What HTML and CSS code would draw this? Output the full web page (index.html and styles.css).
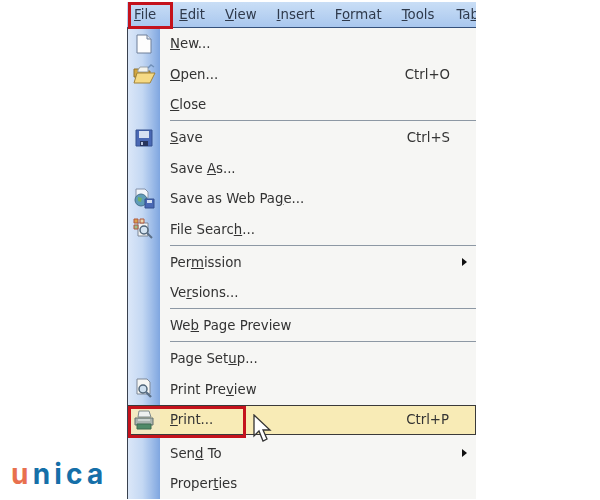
FILE: index.html
```html
<!DOCTYPE html>
<html lang="en">

<head>
    <meta charset="UTF-8">
    <meta name="viewport" content="width=device-width, initial-scale=1.0">
    <title>File menu - Print</title>
    <link rel="stylesheet" href="styles.css">
</head>

<body>
    <div class="shot">
        <!-- Menu bar -->
        <div class="menu-bar">
            <span><u>F</u>ile</span>
            <span><u>E</u>dit</span>
            <span><u>V</u>iew</span>
            <span><u>I</u>nsert</span>
            <span>F<u>o</u>rmat</span>
            <span><u>T</u>ools</span>
            <span>Ta<u>b</u></span>
        </div>

        <!-- File menu -->
        <div class="menu">
            <div class="row">
                <div class="rail">
                    <svg width="20" height="20" viewBox="0 0 20 20"><path d="M3 1h10l4 4v14H3z" fill="#fdfdfd" stroke="#6f7f98"/><path d="M13 1v4h4" fill="#dfe6f0" stroke="#6f7f98"/></svg>
                </div>
                <span class="label"><u>N</u>ew...</span>
            </div>
            <div class="row">
                <div class="rail">
                    <svg width="24" height="22" viewBox="0 0 24 22"><path d="M2 6h7l2 2h7v6H2z" fill="#d2a63f" stroke="#8f7330"/><path d="M6 7l2-3h8v5H6z" fill="#f4f4ee" stroke="#9aa2a8"/><path d="M2 20l3-10h18l-5 10z" fill="#f6da84" stroke="#a08238"/><path d="M16 5l3-3 3 2" fill="none" stroke="#6f8fb8" stroke-width="1.4"/></svg>
                </div>
                <span class="label"><u>O</u>pen...</span>
                <span class="key">Ctrl+O</span>
            </div>
            <div class="row">
                <div class="rail"></div>
                <span class="label"><u>C</u>lose</span>
            </div>
            <div class="sep"><div class="rail"></div><hr></div>
            <div class="row">
                <div class="rail">
                    <svg width="20" height="20" viewBox="0 0 20 20"><path d="M2 2h16v16H2z" fill="#4a68b4" stroke="#34508f"/><path d="M5 3h10v7H5z" fill="#d6e0f2"/><path d="M6 13h8v5H6z" fill="#27345c"/><path d="M7 14h2v3H7z" fill="#b8c4de"/></svg>
                </div>
                <span class="label"><u>S</u>ave</span>
                <span class="key">Ctrl+S</span>
            </div>
            <div class="row">
                <div class="rail"></div>
                <span class="label">Save <u>A</u>s...</span>
            </div>
            <div class="row">
                <div class="rail">
                    <svg width="22" height="22" viewBox="0 0 22 22"><path d="M3 1h9l3 3v6H3z" fill="#f2f5fa" stroke="#8391a8"/><circle cx="8" cy="12" r="6" fill="#5f9cb8" stroke="#47708c"/><path d="M5 9l4 1-1 4-3-1z" fill="#74b06a"/><path d="M12 11h9v9h-9z" fill="#4a68b4" stroke="#34508f"/><path d="M14 12h5v3h-5z" fill="#d6e0f2"/></svg>
                </div>
                <span class="label">Save as Web Pa<u>g</u>e...</span>
            </div>
            <div class="row">
                <div class="rail">
                    <svg width="22" height="22" viewBox="0 0 22 22"><path d="M5 5h10v13H5z" fill="#f4f4f2" stroke="#7c8796"/><path d="M1 1h4v4H1z" fill="#d9a24c" stroke="#b0563c"/><path d="M7 1h4v4H7z" fill="#e8d8b0" stroke="#b0563c"/><path d="M1 7h4v4H1z" fill="#9cc08c" stroke="#b0563c"/><circle cx="11" cy="12" r="4" fill="#d4e4f2" stroke="#4f6478" stroke-width="1.5"/><path d="M14 15l5 5" stroke="#5b7088" stroke-width="2"/></svg>
                </div>
                <span class="label">File Searc<u>h</u>...</span>
            </div>
            <div class="sep"><div class="rail"></div><hr></div>
            <div class="row">
                <div class="rail"></div>
                <span class="label">Per<u>m</u>ission</span>
                <span class="arrow"></span>
            </div>
            <div class="row">
                <div class="rail"></div>
                <span class="label">Ve<u>r</u>sions...</span>
            </div>
            <div class="sep"><div class="rail"></div><hr></div>
            <div class="row">
                <div class="rail"></div>
                <span class="label">We<u>b</u> Page Preview</span>
            </div>
            <div class="sep"><div class="rail"></div><hr></div>
            <div class="row">
                <div class="rail"></div>
                <span class="label">Page Set<u>u</u>p...</span>
            </div>
            <div class="row">
                <div class="rail">
                    <svg width="20" height="22" viewBox="0 0 20 22"><path d="M3 1h10l3 3v12H3z" fill="#f6f6f4" stroke="#7c8796"/><circle cx="9" cy="11" r="4" fill="#cfe0f0" stroke="#4f6478" stroke-width="1.5"/><path d="M12 14l5 5" stroke="#5b7088" stroke-width="2.4"/></svg>
                </div>
                <span class="label">Print Pre<u>v</u>iew</span>
            </div>
            <div class="row active">
                <div class="rail">
                    <svg width="22" height="20" viewBox="0 0 22 20"><path d="M6 1h10l2 6H5z" fill="#eef0f0" stroke="#7f8a8c"/><path d="M2 8h18v7H2z" fill="#a9b4b0" stroke="#65716e"/><path d="M4 14h14v5H4z" fill="#4f8a68" stroke="#3c6a50"/><path d="M5 10h12" stroke="#eef2f0"/></svg>
                </div>
                <span class="label"><u>P</u>rint...</span>
                <span class="key">Ctrl+P</span>
            </div>
            <div class="row">
                <div class="rail"></div>
                <span class="label">Sen<u>d</u> To</span>
                <span class="arrow"></span>
            </div>
            <div class="row">
                <div class="rail"></div>
                <span class="label">Proper<u>t</u>ies</span>
            </div>
        </div>

        <!-- Red marks and pointer on top of the screenshot -->
        <div class="mark mark-file"></div>
        <div class="mark mark-print"></div>
        <svg class="pointer" width="20" height="30" viewBox="0 0 20 30"><path d="M1 1v21l5-5 4 10 4-2-4-9h7z" fill="#fff" stroke="#333" stroke-width="1.3"/></svg>
    </div>

    <div class="logo"><span class="logo-u">u</span>nica</div>
</body>

</html>
```

FILE: styles.css
```css
/* Office 2003 style menu */
html,
body {
    margin: 0;
    height: 500px;
    overflow: hidden;
    background: #fff;
}

.shot {
    position: relative;
    width: 349px;
    height: 498px;
    margin: 2px 0 0 127px;
    overflow: hidden;
    font-family: "DejaVu Sans", sans-serif;
    font-size: 13.3px;
    color: #333;
    filter: blur(0.35px);
}

.menu-bar {
    display: flex;
    gap: 20px;
    height: 25px;
    padding-left: 7px;
    align-items: center;
    background: linear-gradient(#c9def6, #a9c7ee);
    border-bottom: 1px solid #34507a;
    white-space: nowrap;
    color: #2f3a4c;
}

.menu-bar span:first-child {
    margin-right: 3px;
}

.menu-bar span:last-child {
    margin-left: 2px;
}

.menu {
    border-left: 1px solid #39414f;
    background: #f6f6f4;
    padding-top: 0.6px;
}

.row,
.sep {
    display: flex;
}

.row {
    height: 30.5px;
    align-items: center;
}

.rail {
    flex: none;
    align-self: stretch;
    width: 32px;
    display: flex;
    align-items: center;
    justify-content: center;
    background: linear-gradient(90deg, #dbe7f8, #c4d8f3 45%, #7fa6e0);
}

.label {
    flex: 1;
    margin-left: 10px;
}

.key {
    margin-right: 26px;
}

.arrow {
    width: 0;
    height: 0;
    margin-right: 9px;
    border-left: 5px solid #111;
    border-top: 4px solid transparent;
    border-bottom: 4px solid transparent;
}

.sep {
    height: 2.5px;
}

.sep hr {
    flex: 1;
    height: 1px;
    margin: 0 0 0 10px;
    border: 0;
    background: #8d98a4;
}

.active {
    height: 28px;
    margin: 0.4px 0 3px;
    border-top: 1px solid #3a3a3a;
    border-bottom: 1px solid #3a3a3a;
    border-right: 1px solid #3a3a3a;
    background: #f8ebb6;
}

.active .rail {
    background: #f3e9c2;
}

.mark {
    position: absolute;
    border: 3px solid #c4121c;
    box-sizing: border-box;
}

.mark-file {
    left: 1px;
    top: 0;
    width: 45px;
    height: 27px;
}

.mark-print {
    left: 1px;
    top: 404px;
    width: 118px;
    height: 32px;
}

.pointer {
    position: absolute;
    left: 126px;
    top: 412px;
}

.logo {
    position: absolute;
    left: 11px;
    top: 457px;
    font-family: Inter, sans-serif;
    font-size: 28px;
    font-weight: 700;
    letter-spacing: 4.2px;
    color: #156fa8;
}

.logo-u {
    color: #e8704e;
}
```
